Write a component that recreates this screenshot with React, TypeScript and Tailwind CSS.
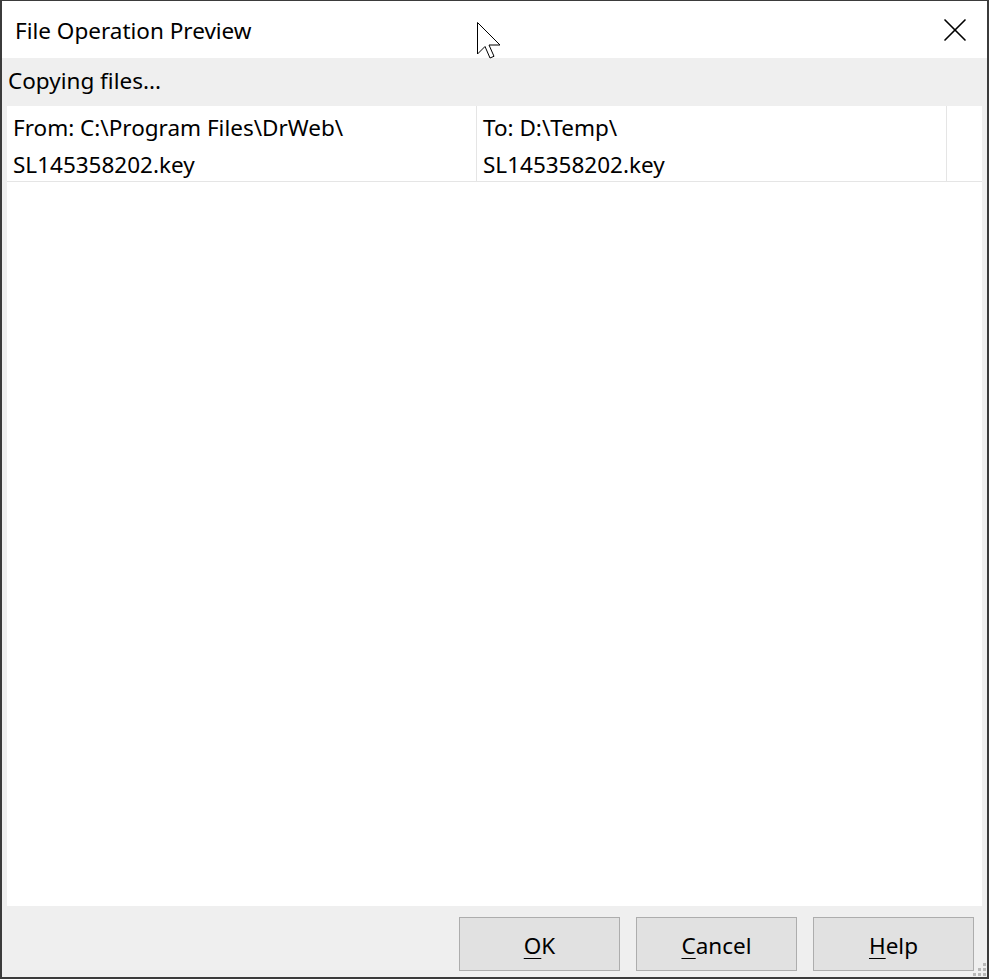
import { X } from "lucide-react";

const font = { fontFamily: '"Noto Sans", "Open Sans", sans-serif' };

function Btn({ k, rest }: { k: string; rest: string }) {
  return (
    <button
      type="button"
      className="flex h-[54px] w-[161px] items-center justify-center border border-[#adadad] bg-[#e1e1e1] pt-[3px] text-[22.5px] text-black"
    >
      <span className="underline decoration-1 underline-offset-[4px]">{k}</span>
      {rest}
    </button>
  );
}

function Cursor() {
  return (
    <svg
      className="absolute left-[474px] top-[20px]"
      width="28"
      height="40"
      viewBox="0 0 28 40"
    >
      <path
        d="M1.5 1.5 L1.5 33 L9 25.5 L14 37 L18 35.3 L13 24 L24 24 Z"
        fill="#fff"
        stroke="#000"
        strokeWidth="1"
      />
    </svg>
  );
}

export default function App() {
  return (
    <div
      className="relative flex h-[979px] w-[989px] flex-col border-t border-l-2 border-r-2 border-b-2 border-[#3b3b3b] bg-white text-black"
      style={font}
    >
      <div className="flex h-[57px] shrink-0 items-center justify-between bg-white pl-[13px] pr-[12px]">
        <span className="pt-[2px] text-[22.5px]">File Operation Preview</span>
        <X size={40} strokeWidth={1} className="text-black" />
      </div>
      <div className="flex min-h-0 flex-1 flex-col bg-[#efefef] px-[5px]">
        <div className="flex h-[48px] shrink-0 items-center pb-[2px] pl-[1px] text-[22.5px]">
          Copying files...
        </div>
        <div className="flex min-h-0 flex-1 flex-col bg-white">
          <div className="flex h-[76px] border-b border-[#e5e5e5] text-[22.5px] leading-[37px]">
            <div className="w-[470px] border-r border-[#e5e5e5] pl-[6px] pt-[3px]">
              From: C:\Program Files\DrWeb\
              <br />
              SL145358202.key
            </div>
            <div className="w-[470px] border-r border-[#e5e5e5] pl-[6px] pt-[3px]">
              To: D:\Temp\
              <br />
              SL145358202.key
            </div>
            <div className="flex-1" />
          </div>
        </div>
        <div className="flex h-[71px] shrink-0 items-start justify-end gap-[16px] pt-[11px] pr-[8px]">
          <Btn k="O" rest="K" />
          <Btn k="C" rest="ancel" />
          <Btn k="H" rest="elp" />
        </div>
      </div>
      <div className="absolute bottom-[1px] right-[1px] grid grid-cols-3 gap-[2px]">
        <span />
        <span />
        <span className="h-[3px] w-[3px] bg-[#b8b8b8]" />
        <span />
        <span className="h-[3px] w-[3px] bg-[#b8b8b8]" />
        <span className="h-[3px] w-[3px] bg-[#b8b8b8]" />
        <span className="h-[3px] w-[3px] bg-[#b8b8b8]" />
        <span className="h-[3px] w-[3px] bg-[#b8b8b8]" />
        <span className="h-[3px] w-[3px] bg-[#b8b8b8]" />
      </div>
      <Cursor />
    </div>
  );
}
